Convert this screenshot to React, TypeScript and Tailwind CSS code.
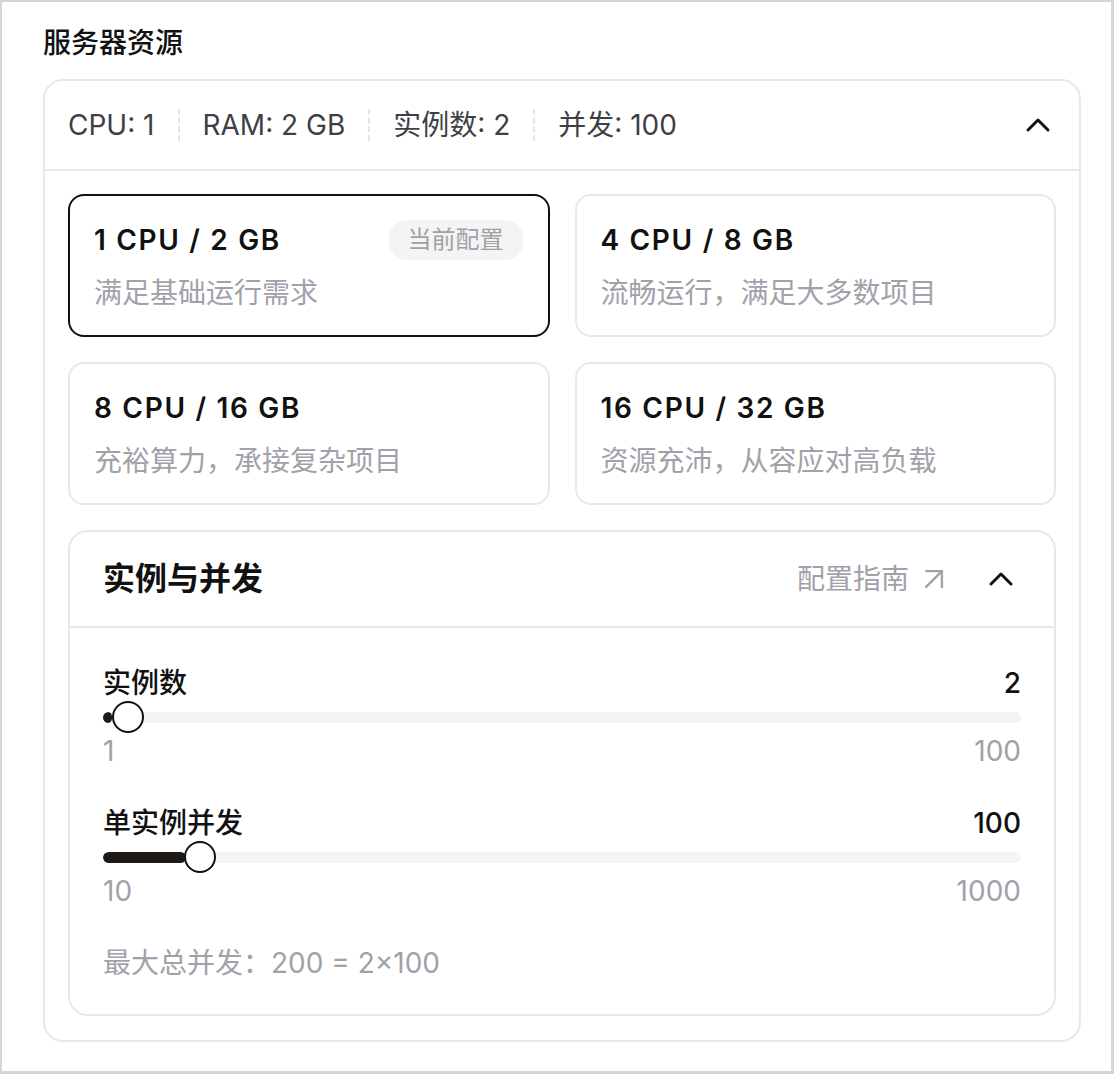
import { ChevronUp, ArrowUpRight } from "lucide-react";

const font = { fontFamily: "Inter, 'Noto Sans CJK SC', sans-serif" };

interface SliderProps {
  label: string;
  value: number;
  min: number;
  max: number;
}

function Slider({ label, value, min, max }: SliderProps) {
  const p = (value - min) / (max - min);
  return (
    <div className="flex flex-col">
      <div className="flex items-center justify-between h-[36px]">
        <span className="text-[28px] font-medium text-[#111]">{label}</span>
        <span className="text-[28px] font-medium text-[#111]">{value}</span>
      </div>
      <div className="relative h-[32px] flex items-center">
        <div className="relative w-full h-[11px] rounded-full bg-[#f4f4f3] overflow-hidden">
          <div
            className="absolute left-0 top-0 h-full rounded-full bg-[#1c1917]"
            style={{ width: `${p * 100}%` }}
          />
        </div>
        <div
          className="absolute top-0 w-[32px] h-[32px] rounded-full border-2 border-[#111] bg-white"
          style={{ left: `calc(${p * 100}% - ${p * 32}px)` }}
        />
      </div>
      <div className="flex items-center justify-between h-[36px] text-[28px] text-[#a1a1aa]">
        <span>{min}</span>
        <span>{max}</span>
      </div>
    </div>
  );
}

const plans = [
  { title: "1 CPU / 2 GB", desc: "满足基础运行需求", current: true },
  { title: "4 CPU / 8 GB", desc: "流畅运行，满足大多数项目" },
  { title: "8 CPU / 16 GB", desc: "充裕算力，承接复杂项目" },
  { title: "16 CPU / 32 GB", desc: "资源充沛，从容应对高负载" },
];

function Divider() {
  return <div className="h-8 border-l-2 border-dashed border-[#e5e5e5] mx-[23px]" />;
}

export default function App() {
  return (
    <div
      style={font}
      className="w-[1114px] h-[1074px] bg-white border-2 border-r-[3px] border-b-[3px] border-[#d6d6d6] pl-[41px] pr-[30px] pt-[21px]"
    >
      <h2 className="text-[28px] leading-[40px] font-medium text-[#111] mb-4">服务器资源</h2>

      <div className="rounded-[20px] border-2 border-[#e8e8e8]">
        <div className="h-[90px] flex items-center pl-[23px] pr-[21px] border-b-2 border-[#e8e8e8] text-[28px] text-[#3f3f46]">
          <span>CPU: 1</span>
          <Divider />
          <span>RAM: 2 GB</span>
          <Divider />
          <span>实例数: 2</span>
          <Divider />
          <span>并发: 100</span>
          <ChevronUp size={40} strokeWidth={1.75} className="ml-auto text-[#111]" />
        </div>

        <div className="px-[23px] pt-[23px] pb-[24px] flex flex-col gap-[25px]">
          <div className="grid grid-cols-2 gap-[25px]">
            {plans.map((plan) => (
              <div
                key={plan.title}
                className={
                  plan.current
                    ? "h-[143px] rounded-[16px] border-2 border-[#111] px-6 pt-6"
                    : "h-[143px] rounded-[16px] border-2 border-[#e8e8e8] px-6 pt-6"
                }
              >
                <div className="flex items-center justify-between h-[40px]">
                  <span className="text-[28px] font-semibold tracking-[0.06em] text-[#111]">{plan.title}</span>
                  {plan.current && (
                    <span className="h-[40px] px-5 flex items-center rounded-full bg-[#f4f4f4] text-[24px] text-[#a1a1aa]">
                      当前配置
                    </span>
                  )}
                </div>
                <div className="mt-[13px] text-[28px] leading-[40px] text-[#a1a1aa]">{plan.desc}</div>
              </div>
            ))}
          </div>

          <div className="rounded-[20px] border-2 border-[#e8e8e8]">
            <div className="h-[96px] flex items-center px-[33px] border-b-2 border-[#e8e8e8]">
              <span className="text-[32px] font-semibold text-[#111]">实例与并发</span>
              <span className="ml-auto text-[28px] text-[#a1a1aa]">配置指南</span>
              <ArrowUpRight size={38} strokeWidth={1.5} className="ml-[6px] text-[#a1a1aa]" />
              <ChevronUp size={40} strokeWidth={1.75} className="ml-7 text-[#111]" />
            </div>
            <div className="px-[33px] pt-[37px] pb-[33px] flex flex-col gap-[36px]">
              <Slider label="实例数" value={2} min={1} max={100} />
              <Slider label="单实例并发" value={100} min={10} max={1000} />
              <div className="h-[36px] flex items-center text-[28px] text-[#a1a1aa]">
                最大总并发：200 = 2×100
              </div>
            </div>
          </div>
        </div>
      </div>
    </div>
  );
}
